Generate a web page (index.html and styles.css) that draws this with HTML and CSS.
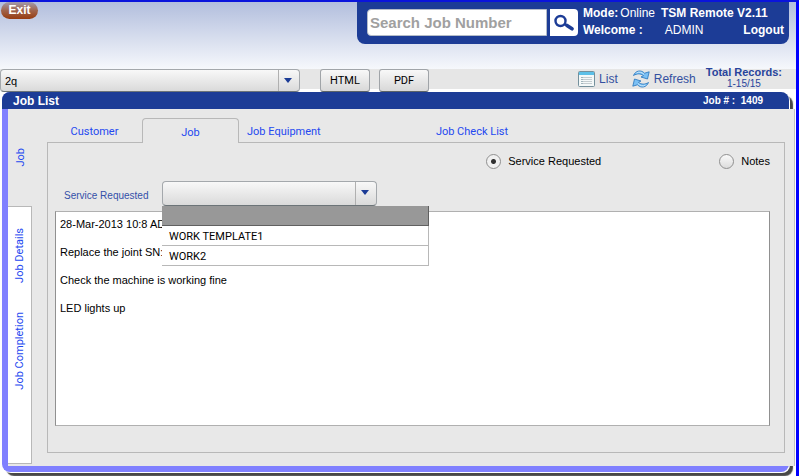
FILE: index.html
```html
<!DOCTYPE html>
<html lang="en">
<head>
  <meta charset="UTF-8">
  <title>TSM Remote</title>
  <meta name="viewport" content="width=device-width, initial-scale=1.0">
  <link rel="stylesheet" href="styles.css">
</head>
<body>

  <header class="top">
    <button class="exit" type="button">Exit</button>

    <div class="banner">
      <form class="search">
        <input type="text" placeholder="Search Job Number" aria-label="Search Job Number">
        <button type="button" aria-label="Search">
          <svg width="20" height="18" viewBox="0 0 20 18">
            <circle cx="6.5" cy="7" r="5" fill="none" stroke="#1c3c96" stroke-width="2.4"/>
            <path d="M10.5 10 L13 11.500" stroke="#1c3c96" stroke-width="2.4"/>
            <path d="M13 11.500 L18 14.800" stroke="#1c3c96" stroke-width="3.6" stroke-linecap="round"/>
          </svg>
        </button>
      </form>
      <div class="info">
        <div class="info-row">
          <b>Mode:</b><span class="mode">Online</span>
          <b class="product">TSM Remote V2.11</b>
        </div>
        <div class="info-row">
          <b>Welcome :</b><span class="user">ADMIN</span>
          <a class="logout" href="#">Logout</a>
        </div>
      </div>
    </div>
  </header>

  <div class="toolbar">
    <div class="combo combo-query">
      <select aria-label="Query">
        <option>2q</option>
      </select>
    </div>
    <button class="btn" type="button">HTML</button>
    <button class="btn" type="button">PDF</button>

    <div class="tools">
      <a class="tool" href="#">
        <svg width="17" height="16" viewBox="0 0 17 16">
          <rect x="0.5" y="0.5" width="16" height="15" rx="1" fill="#f4f8f8" stroke="#74909c"/>
          <path d="M1 1h15v3H1z" fill="#5cc0e8"/>
          <path d="M3 6.5h2M3 8.5h2M3 10.5h2M3 12.5h2" stroke="#a0b4bc"/>
          <path d="M5 6.5h9M5 8.5h9M5 10.5h9M5 12.5h9" stroke="#c4ccd0"/>
        </svg>
        List
      </a>
      <a class="tool" href="#">
        <svg width="18" height="18" viewBox="0 0 18 18">
          <g fill="#7cc0f4" stroke="#2474bc" stroke-width="0.8" stroke-linejoin="round">
            <path d="M1.500 5.500C3.500 0.500 9 -0.500 12.500 3.200L17.200 1.800L15.500 9L9 7L11.500 5.600C8.500 3.200 4.800 3.500 1.500 5.500Z"/>
            <path d="M16.500 12.500C14.500 17.500 9 18.500 5.500 14.800L0.800 16.200L2.500 9L9 11L6.500 12.400C9.500 14.800 13.200 14.500 16.500 12.500Z"/>
          </g>
          <path d="M4.500 3C7 1.500 9.500 2 12 4.300M6 13.700C8.500 16 11 16.500 13.500 15" fill="none" stroke="#c8e8fc"/>
        </svg>
        Refresh
      </a>
      <div class="records">
        <b>Total Records:</b>
        <span>1-15/15</span>
      </div>
    </div>
  </div>

  <main class="panel">
    <div class="panel-head">
      <h1>Job List</h1>
      <div class="job-no">Job # :&nbsp; 1409</div>
    </div>

    <div class="panel-body">
      <nav class="side">
        <a class="side-job" href="#"><span>Job</span></a>
        <div class="side-rest">
          <a href="#"><span>Job Details</span></a>
          <a href="#"><span>Job Completion</span></a>
        </div>
      </nav>

      <section class="content">
        <nav class="tabs">
          <a href="#">Customer</a>
          <a class="active" href="#">Job</a>
          <a class="tab-left" href="#">Job Equipment</a>
          <a class="tab-wide" href="#">Job Check List</a>
          <span class="tab-fill"></span>
        </nav>

        <div class="frame">
          <div class="radios">
            <label class="first"><input type="radio" name="view" checked>Service Requested</label>
            <label><input type="radio" name="view">Notes</label>
          </div>

          <div class="field">
            <label for="service">Service Requested</label>
            <div class="combo combo-service">
              <select id="service">
                <option></option>
                <option>WORK TEMPLATE1</option>
                <option>WORK2</option>
              </select>
              <ul class="menu">
                <li class="selected"></li>
                <li>WORK TEMPLATE1</li>
                <li>WORK2</li>
              </ul>
            </div>
          </div>

          <textarea aria-label="Service text">28-Mar-2013 10:8 ADMIN

Replace the joint SN:5

Check the machine is working fine

LED lights up</textarea>
        </div>
      </section>
    </div>
  </main>

</body>
</html>
```

FILE: styles.css
```css
* {
  box-sizing: border-box;
}

body {
  margin: 0;
  min-height: 100vh;
  display: flex;
  flex-direction: column;
  border-top: 2px solid #0a14dc;
  border-right: 3px solid #0000ff;
  background: #fff;
  font-family: "Liberation Sans", Arial, sans-serif;
  font-size: 11px;
  color: #000;
}

a {
  text-decoration: none;
}

button, input, select, textarea {
  font-family: inherit;
  margin: 0;
}

/* header */

.top {
  display: flex;
  justify-content: space-between;
  align-items: flex-start;
  height: 67px;
  padding-right: 7px;
  background: linear-gradient(#b2bedd, #f6f8fc);
}

.exit {
  width: 37px;
  height: 17px;
  margin-left: 1px;
  padding: 0;
  border: 0;
  border-radius: 9px;
  background: linear-gradient(#a09cae, #a0644c 50%, #983c10);
  color: #fff;
  font-size: 12px;
  font-weight: bold;
  line-height: 15px;
}

.banner {
  display: flex;
  gap: 5px;
  width: 432px;
  height: 42px;
  padding: 0 5px 0 10px;
  border-radius: 0 0 8px 8px;
  background: #1c3c96;
  color: #fff;
}

.search {
  display: flex;
  gap: 3px;
  padding-top: 7px;
}

.search input {
  width: 180px;
  height: 27px;
  padding: 0 2px;
  border: 1px solid #b4bcc8;
  border-radius: 4px 0 0 4px;
  background: #fff;
  font-size: 15px;
  font-weight: bold;
}

.search input::placeholder {
  color: #a0a0a0;
}

.search button {
  display: flex;
  align-items: center;
  justify-content: center;
  width: 28px;
  height: 27px;
  padding: 0;
  border: 0;
  border-radius: 0 4px 4px 0;
  background: #fff;
}

.info {
  flex: 1;
  padding-top: 3px;
  font-size: 12px;
  line-height: 17px;
}

.info-row {
  display: flex;
  white-space: nowrap;
}

.mode {
  margin-left: 2px;
}

.product {
  margin-left: 6px;
}

.user {
  margin-left: 22px;
}

.logout {
  margin-left: auto;
  color: #fff;
  font-weight: bold;
}

/* toolbar */

.toolbar {
  display: flex;
  height: 23px;
  padding-right: 14px;
  background: linear-gradient(#e6e6e6 20px, #fff 20px);
}

.combo {
  position: relative;
  height: 23px;
}

.combo select {
  width: 100%;
  height: 100%;
  padding: 0 4px;
  appearance: none;
  border: 1px solid #a4a8ac;
  border-bottom-color: #6c7478;
  border-radius: 4px;
  background: linear-gradient(#f8f8f8, #dadada);
  font-size: 11px;
  color: #000;
}

.combo::before {
  content: "";
  position: absolute;
  top: 1px;
  bottom: 1px;
  right: 21px;
  border-left: 1px solid #b0b0b0;
}

.combo::after {
  content: "";
  position: absolute;
  top: 9px;
  right: 8px;
  border: 4px solid transparent;
  border-top: 5px solid #1c3c96;
  border-bottom: 0;
}

.combo-query {
  width: 300px;
  margin-right: 20px;
}

.btn {
  width: 50px;
  height: 23px;
  margin-right: 9px;
  padding: 0;
  border: 1px solid #a0a4a8;
  border-bottom-color: #5c6468;
  border-radius: 3px;
  background: linear-gradient(#f8f8f8, #d8d8d8);
  font-size: 11px;
  color: #000;
}

.btn, .menu, .side a, .tabs a {
  font-family: Roboto, Tahoma, sans-serif;
}

.tools {
  display: flex;
  margin-left: auto;
}

.tool {
  display: flex;
  align-items: center;
  gap: 4px;
  height: 20px;
  margin-right: 14px;
  font-size: 12px;
  color: #3450a0;
}

.tool + .tool {
  margin-right: 10px;
}

.records {
  display: flex;
  flex-direction: column;
  align-items: center;
  margin-top: -3px;
  font-size: 11px;
  line-height: 12px;
  color: #28449c;
}

.records span {
  font-size: 10px;
}

/* job panel */

.panel {
  flex: 1;
  display: flex;
  flex-direction: column;
  margin: 0 7px 4px 2px;
  border-left: 6px solid #8080ff;
  border-bottom: 6px solid #8080ff;
  border-radius: 8px;
  background: #e8e8e8;
  box-shadow: 1px 1px 0 #fff, 4px 4px 1px #484848;
}

.panel-head {
  display: flex;
  justify-content: space-between;
  align-items: center;
  height: 17px;
  margin-left: -6px;
  padding: 0 26px 0 11px;
  border-radius: 8px 8px 0 0;
  background: #1c3c96;
  color: #fff;
}

.panel-head h1 {
  margin: 0;
  font-size: 12px;
}

.job-no {
  font-size: 10px;
  font-weight: bold;
}

/* body sticks out over the shadow on the right */
.panel-body {
  flex: 1;
  display: flex;
  margin-right: -6px;
  border-right: 1px solid #c0c0c0;
  background: #e8e8e8;
}

.side {
  display: flex;
  flex-direction: column;
  width: 24px;
  margin-right: 15px;
  padding-bottom: 2px;
}

.side a {
  display: flex;
  align-items: center;
  justify-content: center;
}

.side span {
  writing-mode: vertical-rl;
  transform: rotate(180deg);
}

.side a, .tabs a {
  font-size: 11px;
  color: #2448f0;
}

.side-job {
  height: 97px;
}

.side-rest {
  flex: 1;
  border: 1px solid #b8b8b8;
  border-left: 0;
  background: #fff;
}

.side-rest a {
  height: 96px;
}

.content {
  flex: 1;
  display: flex;
  flex-direction: column;
  margin: 9px 9px 13px 0;
}

.tabs {
  display: flex;
  height: 25px;
}

.tabs a {
  display: flex;
  align-items: center;
  justify-content: center;
  width: 95px;
  padding-top: 3px;
  border-bottom: 1px solid #b8b8b8;
}

.tabs .active {
  width: 97px;
  border: 1px solid #b8b8b8;
  border-bottom: 0;
  border-radius: 4px 4px 0 0;
}

.tabs .tab-left {
  justify-content: flex-start;
  width: 138px;
  padding-left: 8px;
}

.tabs .tab-wide {
  width: 190px;
}

.tab-fill {
  flex: 1;
  border-bottom: 1px solid #b8b8b8;
}

.frame {
  flex: 1;
  display: flex;
  flex-direction: column;
  padding: 10px 14px 26px 7px;
  border: 1px solid #b8b8b8;
  border-top: 0;
}

.radios {
  display: flex;
  justify-content: flex-end;
}

.radios label {
  display: flex;
  align-items: center;
  gap: 7px;
  height: 16px;
}

.radios .first {
  width: 233px;
}

.radios input {
  width: 15px;
  height: 15px;
  appearance: none;
  border: 1px solid #909090;
  border-radius: 50%;
  background: linear-gradient(#fafafa, #dcdcdc);
}

.radios input:checked {
  background: radial-gradient(circle, #303030 2px, #f0f0f0 3px);
}

.field {
  display: flex;
  align-items: center;
  margin-top: 12px;
  padding-left: 9px;
}

.field label {
  width: 98px;
  padding-top: 4px;
  font-size: 10px;
  color: #3450a8;
}

.combo-service {
  width: 215px;
  height: 25px;
}

.menu {
  position: absolute;
  top: 25px;
  left: 0;
  width: 267px;
  margin: 0;
  padding: 0;
  list-style: none;
  background: #fff;
}

.menu li {
  height: 20px;
  padding-left: 7px;
  border-right: 1px solid #b8b8b8;
  border-bottom: 1px solid #b8b8b8;
  line-height: 21px;
}

.menu .selected {
  border-color: #606060;
  background: #989898;
}

textarea {
  flex: 1;
  min-height: 120px;
  margin-top: 5px;
  padding: 5px 4px;
  resize: none;
  border: 1px solid #b0b0b0;
  border-left-color: #909090;
  border-right-color: #909090;
  background: #fff;
  font-size: 11px;
  line-height: 14px;
  color: #000;
}
```
